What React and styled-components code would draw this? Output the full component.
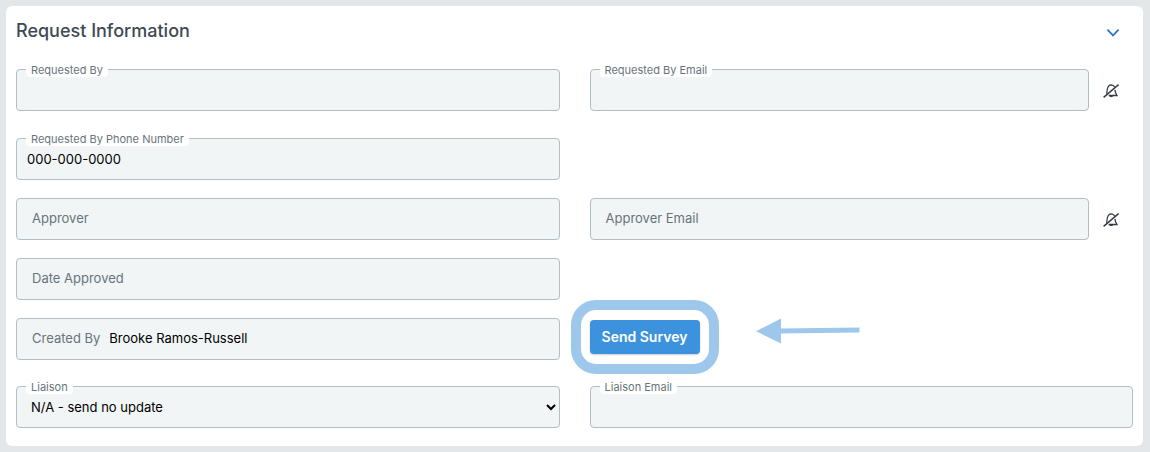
import React from "react";
import styled, { createGlobalStyle, css } from "styled-components";

const GlobalStyle = createGlobalStyle`
  * {
    box-sizing: border-box;
  }

  body {
    margin: 0;
    background: #e3e7ea;
    font-family: Inter, "Liberation Sans", sans-serif;
    font-size: 13px;
    color: #000;
  }
`;

const BellOffIcon = () => (
  <svg width="16" height="16" viewBox="0 0 16 16" fill="none" aria-hidden="true">
    <path
      d="M3.600 10.800L4.400 5.600C5 3 6.400 1.900 8.200 1.800C9.800 1.800 11 2.600 11.600 4"
      stroke="#343a43"
      strokeWidth="1.2"
    />
    <path
      d="M12 6.800L12.400 9.400L14 12.500H5.600"
      stroke="#343a43"
      strokeWidth="1.3"
    />
    <path d="M6.2 12.6H10.2C10 14.6 6.6 14.6 6.2 12.6Z" fill="#343a43" />
    <path d="M0.6 14.4L15.6 1.6" stroke="#343a43" strokeWidth="1.5" />
  </svg>
);

const ChevronIcon = () => (
  <svg width="14" height="12" viewBox="0 0 14 12" fill="none" aria-hidden="true">
    <path d="M1.4 3.6L7 9.4L12.6 3.6" stroke="#2f78c4" strokeWidth="1.8" />
  </svg>
);

const ArrowLeft = () => (
  <svg width="104" height="26" viewBox="0 0 104 26" aria-hidden="true">
    <path d="M0 13.2L25 0.4V25.4Z" fill="#9dc8ec" />
    <path d="M24 10.4L103.5 9.4V14.6L24 15.6Z" fill="#9dc8ec" />
  </svg>
);

// label sits on the top border when floating, otherwise inline before the value
const Field = ({ id, label, floating, value = "", children }) => (
  <FieldBox $inline={!floating}>
    <FieldLabel htmlFor={id} $floating={floating}>
      {label}
    </FieldLabel>
    {children || (
      <TextInput id={id} type="text" defaultValue={value} $inline={!floating} />
    )}
  </FieldBox>
);

const NotifyButton = ({ label }) => (
  <IconButton type="button" aria-label={label}>
    <BellOffIcon />
  </IconButton>
);

const App = () => {
  const [open, setOpen] = React.useState(true);

  return (
    <>
      <GlobalStyle />
      <Panel>
        <PanelHeader>
          <h2>Request Information</h2>
          <IconButton
            type="button"
            aria-label="Toggle section"
            aria-expanded={open}
            onClick={() => setOpen((prev) => !prev)}
          >
            <ChevronIcon />
          </IconButton>
        </PanelHeader>
        {open && (
          <form onSubmit={(e) => e.preventDefault()}>
            <Row $space={19}>
              <Field id="requestedBy" label="Requested By" floating />
              <WithAction>
                <Field id="requestedByEmail" label="Requested By Email" floating />
                <NotifyButton label="Mute requester" />
              </WithAction>
            </Row>
            <Row $space={27}>
              <Field
                id="phone"
                label="Requested By Phone Number"
                value="000-000-0000"
                floating
              />
            </Row>
            <Row $space={18}>
              <Field id="approver" label="Approver" />
              <WithAction>
                <Field id="approverEmail" label="Approver Email" />
                <NotifyButton label="Mute approver" />
              </WithAction>
            </Row>
            <Row $space={18}>
              <Field id="dateApproved" label="Date Approved" />
            </Row>
            <Row $space={18}>
              <Field id="createdBy" label="Created By" value="Brooke Ramos-Russell" />
              <SurveyCell>
                <Highlight>
                  <SendButton type="button">Send Survey</SendButton>
                </Highlight>
                <ArrowLeft />
              </SurveyCell>
            </Row>
            <Row $space={26}>
              <Field id="liaison" label="Liaison" floating>
                <Select id="liaison" defaultValue="none">
                  <option value="none">N/A - send no update</option>
                </Select>
              </Field>
              <Field id="liaisonEmail" label="Liaison Email" floating />
            </Row>
          </form>
        )}
      </Panel>
    </>
  );
};

const Panel = styled.section`
  margin: 6px 7px 6px 6px;
  padding: 10px 10px 18px;
  background: #fff;
  border-radius: 6px;
`;

const PanelHeader = styled.header`
  display: flex;
  align-items: center;
  justify-content: space-between;
  height: 34px;
  padding-right: 4px;
  padding-bottom: 4px;

  h2 {
    margin: 0;
    font-size: 18px;
    line-height: 24px;
    font-weight: 500;
    color: #3d4a53;
  }
`;

const IconButton = styled.button`
  display: flex;
  align-items: center;
  justify-content: center;
  width: 32px;
  height: 24px;
  padding: 2px 0 0;
  border: 0;
  background: none;
  cursor: pointer;
`;

const Row = styled.div`
  display: grid;
  grid-template-columns: 1fr 1fr;
  column-gap: 30px;
  margin-top: ${({ $space }) => $space}px;
`;

const FieldBox = styled.div`
  position: relative;
  display: flex;
  align-items: center;
  height: 42px;
  padding-bottom: ${({ $inline }) => ($inline ? 2 : 0)}px;
  border: 1px solid #b0bec5;
  border-radius: 4px;
  background: #f1f5f6;
`;

const FieldLabel = styled.label`
  color: #67747b;
  white-space: nowrap;

  ${({ $floating }) =>
    $floating
      ? css`
          position: absolute;
          top: -7px;
          left: 9px;
          padding: 0 5px;
          border-radius: 4px;
          background: #fff;
          font-size: 11px;
          line-height: 14px;
        `
      : css`
          padding-left: 15px;
          line-height: 20px;
        `}
`;

const control = css`
  flex: 1;
  min-width: 0;
  height: 100%;
  border: 0;
  background: transparent;
  font-family: inherit;
  font-size: 13px;
  color: #000;
`;

const TextInput = styled.input`
  ${control}
  padding: 0 ${({ $inline }) => ($inline ? 9 : 10)}px;
`;

const Select = styled.select`
  ${control}
  padding: 0 0 0 10px;
`;

const WithAction = styled.div`
  display: grid;
  grid-template-columns: 1fr 32px;
  column-gap: 6px;
  align-items: center;
  padding-right: 6px;
`;

const SurveyCell = styled.div`
  display: flex;
  align-items: flex-start;
  gap: 56px;
`;

const Highlight = styled.div`
  position: relative;
  margin-top: 2px;

  &::before {
    content: "";
    position: absolute;
    inset: -20px -19px;
    border: 10px solid #9dc8ec;
    border-radius: 25px;
    pointer-events: none;
  }
`;

const SendButton = styled.button`
  display: block;
  width: 110px;
  height: 34px;
  padding: 0 0 2px;
  border: 0;
  border-radius: 4px;
  background: #3c92dc;
  box-shadow: 0 1px 2px rgba(0, 0, 0, 0.2);
  font-family: inherit;
  font-size: 14px;
  font-weight: 600;
  color: #fff;
  cursor: pointer;
`;

export default App;
